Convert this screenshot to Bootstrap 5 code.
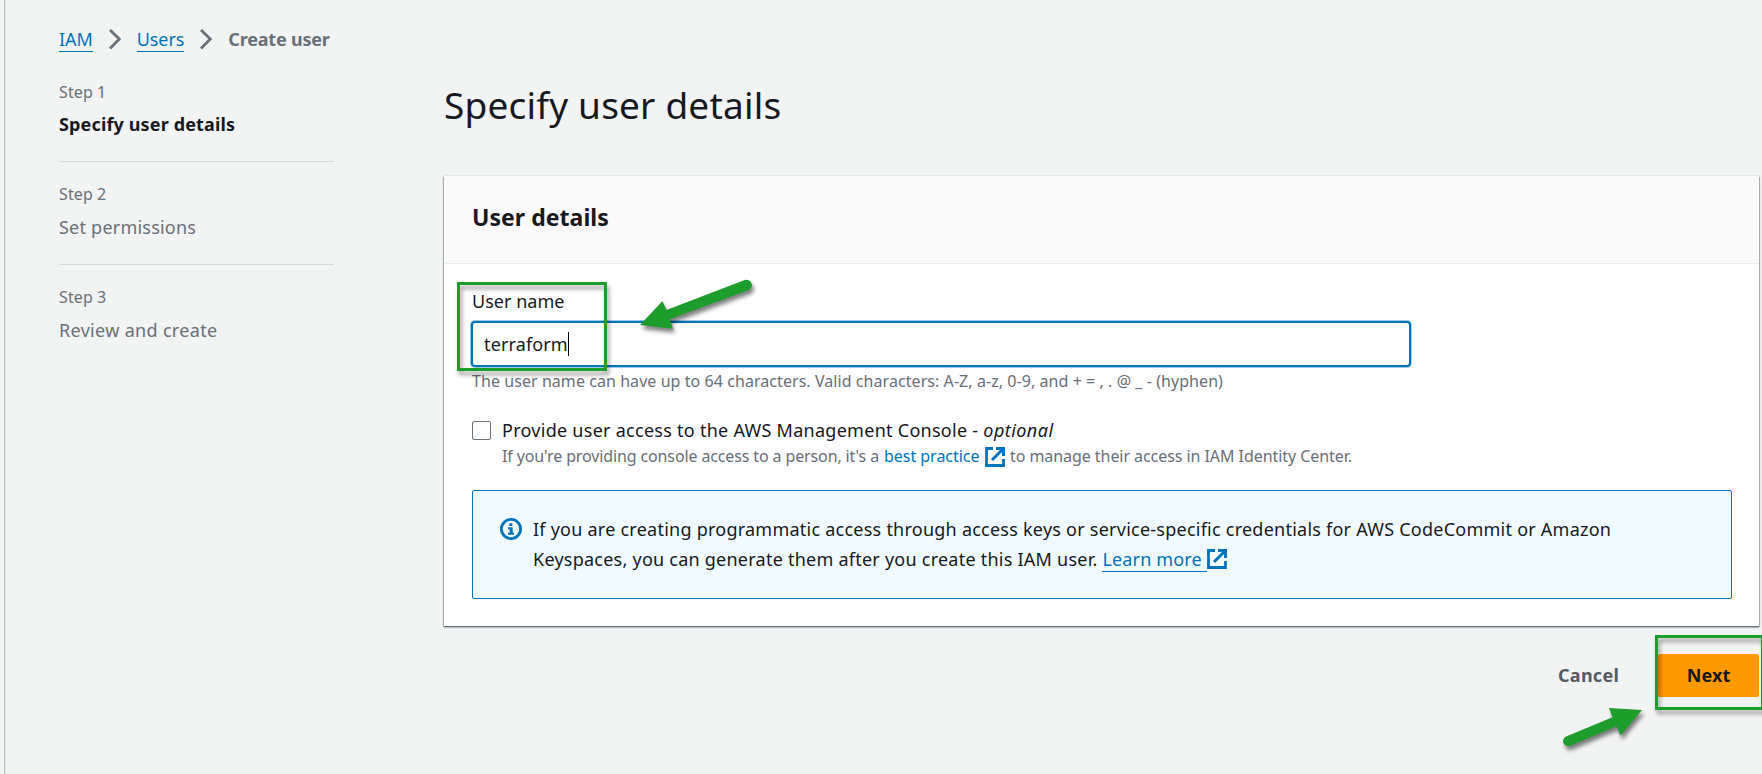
<!DOCTYPE html>
<html lang="en">
<head>
<meta charset="utf-8">
<meta name="viewport" content="width=device-width, initial-scale=1">
<title>Create user | IAM</title>
<link href="https://cdn.jsdelivr.net/npm/bootstrap@5.3.0/dist/css/bootstrap.min.css" rel="stylesheet">
<style>
:root{--ink:#16191f;--muted:#687078;--blue:#0073bb;--mark-green:#1d9d2c}
body{font-family:"Noto Sans","Open Sans",sans-serif;background:#f2f3f3;color:var(--ink);font-size:18px;line-height:30px;height:774px;overflow:hidden}
.edge{width:5px;flex:none;border-right:1px solid #b9c1c2;background:#f4f6f6;box-shadow:1px 0 0 #e2e6e6}
.side{width:275px;flex:none;margin-left:54px;padding-top:20px}
.main{width:1315px;flex:none;margin-left:110px;padding-top:82px}
a{color:var(--blue);text-decoration:none}
.lined{box-shadow:0 1px 0 var(--blue);display:inline-block;line-height:24px}
.crumbs{height:30px;margin-top:4px;color:var(--muted);white-space:nowrap}
.crumbs a{letter-spacing:-.08px}
.crumbs b{font-weight:700;letter-spacing:-.2px}
.crumbs svg{margin:5px 16px 0}
.steps{color:var(--muted);margin-top:5px}
.steps li{padding:20px 0 22px;border-bottom:1px solid #d5dbdb}
.steps li:last-child{border:0}
.steps li:first-child small{padding-top:1px;margin-bottom:5px}
.steps small{display:block;font-size:16px;line-height:24px;letter-spacing:.1px;margin-bottom:6px}
.steps div{letter-spacing:.22px}
.steps li:last-child div{letter-spacing:.32px}
.steps .now{color:var(--ink);font-weight:700;letter-spacing:.14px}
h1{font-size:37px;line-height:46px;font-weight:400;letter-spacing:.2px;margin:0 0 48px}
.panel{border:0;border-radius:0;background:#fff;height:450px;box-shadow:0 -1px 0 #e6e9e9,0 1px 1px #5f6b73,0 2px 2px rgba(0,28,36,.15),1px 1px 1px rgba(0,28,36,.22),-1px 1px 1px rgba(0,28,36,.22)}
.panel .card-header{height:88px;background:#fafafa;border-bottom:1px solid #eaeded;padding:26px 28px 0;border-radius:0}
h2{font-size:23px;line-height:30px;font-weight:700;letter-spacing:.05px;margin:0}
.panel .card-body{padding:25px 27px 0 28px}
.field label{display:block;line-height:24px;letter-spacing:.03px}
.entry{width:940px;height:46px;margin:8px 0 0 -1px;border:2px solid var(--blue);border-radius:4px;box-shadow:0 0 0 1px #99cbe8;padding:0 11px;display:flex;align-items:center;letter-spacing:.13px;background:#fff}
.entry span{margin-top:-1px}
.caret{width:1px;height:24px;background:#000}
.hint{font-size:16px;line-height:24px;color:var(--muted);white-space:nowrap}
.box{width:19px;height:19px;border:1px solid var(--muted);border-radius:2px;margin:3px 11px 0 0;flex:none;background:#fff;appearance:none}
.notice{border:1px solid var(--blue);border-radius:2px;background:#f1faff;height:109px;padding:23px 27px;color:var(--ink);letter-spacing:.24px;margin:22px 0 0}
.btn-go{background:#ff9900;border:0;border-radius:2px;width:101px;height:43px;font:700 18px/43px "Noto Sans",sans-serif;padding:0;letter-spacing:.1px;color:var(--ink)}
.btn-quiet{border:0;color:#545b64;font:700 18px/43px "Noto Sans",sans-serif;padding:0;letter-spacing:.25px;margin-right:39px}
.callout-box{position:absolute;border:3px solid var(--mark-green);filter:drop-shadow(2px 4px 2px rgba(0,0,0,.4));pointer-events:none}
.arrow{position:absolute;overflow:visible;fill:var(--mark-green);filter:drop-shadow(2px 4px 2px rgba(0,0,0,.5));pointer-events:none}
.box-name{left:-15px;top:-7px;width:150px;height:89px}
.arrow-name{left:168px;top:-9px}
.box-next{left:-3px;top:-19px;width:109px;height:75px}
.arrow-next{left:-95px;top:54px}
</style>
</head>
<body>
<svg class="d-none"><symbol id="ext" viewBox="0 0 20 20"><path d="M8 1.500H1.500v17h17V12" fill="none" stroke="#0073bb" stroke-width="2.800"/><path d="M11 1.500h7.500V9M18.300 1.700 7 13" fill="none" stroke="#0073bb" stroke-width="3"/></symbol></svg>
<div class="d-flex h-100">
  <div class="edge"></div>
  <aside class="side">
    <nav class="crumbs d-flex">
      <a href="#"><span class="lined">IAM</span></a>
      <svg width="12" height="21" viewBox="0 0 12 21" fill="none" stroke="#687078" stroke-width="2.8"><path d="m1 1 9.3 9L1 19.5"/></svg>
      <a href="#"><span class="lined">Users</span></a>
      <svg width="12" height="21" viewBox="0 0 12 21" fill="none" stroke="#687078" stroke-width="2.8"><path d="m1 1 9.3 9L1 19.5"/></svg>
      <b>Create user</b>
    </nav>
    <ol class="steps list-unstyled mb-0">
      <li><small>Step 1</small><div class="now">Specify user details</div></li>
      <li><small>Step 2</small><div>Set permissions</div></li>
      <li><small>Step 3</small><div>Review and create</div></li>
    </ol>
  </aside>
  <main class="main">
    <h1>Specify user details</h1>
    <section class="card panel">
      <div class="card-header"><h2>User details</h2></div>
      <div class="card-body">
        <div class="field position-relative">
          <label>User name</label>
          <div class="entry"><span>terraform</span><i class="caret"></i></div>
          <div class="hint" style="letter-spacing:.063px;margin-top:2px">The user name can have up to 64 characters. Valid characters: A-Z, a-z, 0-9, and + = , . @ _ - (hyphen)</div>
          <div class="callout-box box-name"></div>
          <svg class="arrow arrow-name" width="112" height="50" viewBox="640 280 112 50"><path d="M640 325 662.500 301l4 9L744.700 280.100a5.300 5.300 0 0 1 3.800 9.900L669.500 319.300 673 328.700z"/></svg>
        </div>
        <div class="d-flex" style="margin-top:25px">
          <input class="box" type="checkbox">
          <div>
            <div style="line-height:24px;letter-spacing:.27px;white-space:nowrap">Provide user access to the AWS Management Console - <em style="letter-spacing:.45px">optional</em></div>
            <div class="hint d-flex" style="margin-top:2px"><span style="letter-spacing:-.126px;width:382px">If you're providing console access to a person, it's a</span><a href="#" style="width:100.500px;letter-spacing:-.03px">best practice</a><svg width="20" height="20" style="margin:3px 5.500px 0 0"><use href="#ext"/></svg><span style="letter-spacing:-.06px">to manage their access in IAM Identity Center.</span></div>
          </div>
        </div>
        <div class="notice alert d-flex">
          <svg class="flex-shrink-0" width="22" height="22" viewBox="0 0 22 22" style="margin:4px 11px 0 0"><circle cx="11" cy="11" r="9.600" fill="none" stroke="#0073bb" stroke-width="2.800"/><path fill="#0073bb" d="M9.300 5.300h3v2.700h-3zM8 9.300h4.700v5.400H14v2H8v-2h1.700v-3.400H8z"/></svg>
          <div class="text-nowrap">If you are creating programmatic access through access keys or service-specific credentials for AWS CodeCommit or Amazon<br>Keyspaces, you can generate them after you create this IAM user. <a href="#"><span class="lined" style="padding-right:5px;letter-spacing:.15px">Learn more</span><svg width="20" height="20" style="vertical-align:-3px"><use href="#ext"/></svg></a></div>
        </div>
      </div>
    </section>
    <div class="d-flex justify-content-end" style="margin-top:28px">
      <button class="btn btn-quiet">Cancel</button>
      <div class="position-relative">
        <button class="btn btn-go">Next</button>
        <div class="callout-box box-next"></div>
        <svg class="arrow arrow-next" width="80" height="40" viewBox="1563 708 80 40"><path d="M1642 710 1609 708 1612.500 717.200 1566.200 736.500a5 5 0 0 0 3.800 9.300L1616.500 726.200 1620.500 735.500z"/></svg>
      </div>
    </div>
  </main>
</div>
<script src="https://cdn.jsdelivr.net/npm/bootstrap@5.3.0/dist/js/bootstrap.bundle.min.js"></script>
</body>
</html>
